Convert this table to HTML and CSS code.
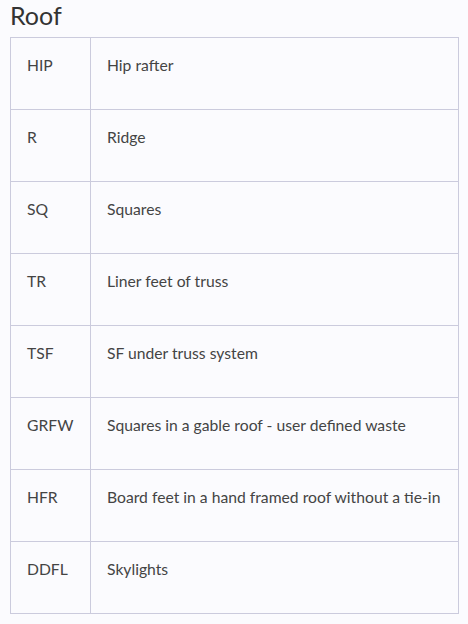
FILE: index.html
```html
<!DOCTYPE html>
<html>
<head>
<meta charset="utf-8">
<link rel="stylesheet" href="styles.css">
</head>
<body>
<h1 class="title">Roof</h1>
<table class="codes">
<tr><td class="code">HIP</td><td class="desc">Hip rafter</td></tr>
<tr><td class="code">R</td><td class="desc">Ridge</td></tr>
<tr><td class="code">SQ</td><td class="desc">Squares</td></tr>
<tr><td class="code">TR</td><td class="desc">Liner feet of truss</td></tr>
<tr><td class="code">TSF</td><td class="desc">SF under truss system</td></tr>
<tr><td class="code">GRFW</td><td class="desc">Squares in a gable roof - user defined waste</td></tr>
<tr><td class="code">HFR</td><td class="desc">Board feet in a hand framed roof without a tie-in</td></tr>
<tr><td class="code">DDFL</td><td class="desc">Skylights</td></tr>
</table>
</body>
</html>
```
FILE: styles.css
```css
html, body {
  margin: 0;
  background: #fbfbfe;
}
body {
  padding: 0 10px;
  font-family: Lato, "Liberation Sans", sans-serif;
  color: #444;
}
.title {
  margin: 0 0 7px 0;
  font-size: 25px;
  font-weight: 400;
  line-height: 1.2;
  color: #333;
}
.codes {
  border-collapse: collapse;
  width: 449px;
}
.codes td {
  border: 1px solid #cbcbdd;
  padding: 15px 16px 32px 16px;
  vertical-align: top;
  font-size: 15.7px;
  line-height: 24px;
  white-space: nowrap;
}
.code {
  width: 47px;
}
```
